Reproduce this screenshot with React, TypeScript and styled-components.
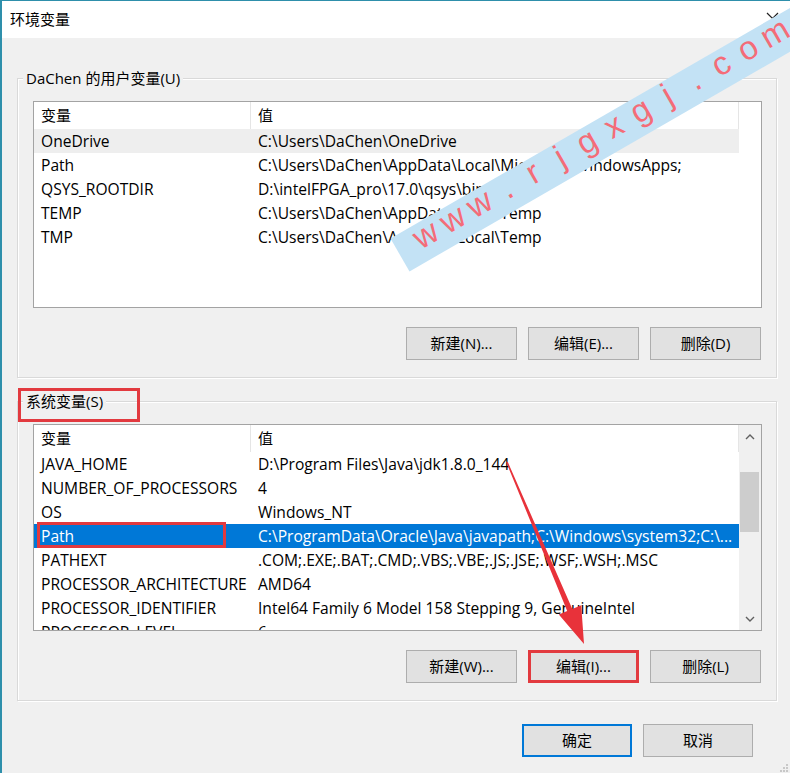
import React from 'react';
import styled, { createGlobalStyle, css } from 'styled-components';

const FONT = `"Open Sans", "Noto Sans CJK SC", sans-serif`;

const GlobalStyle = createGlobalStyle`
  html, body { margin: 0; padding: 0; background: #f0f0f0; }
  body { width: 790px; height: 773px; overflow: hidden; font-family: ${FONT}; }
  * { box-sizing: border-box; }
`;

const Page = styled.div`
  position: relative;
  width: 790px;
  height: 773px;
  overflow: hidden;
`;

const Window = styled.div`
  width: 790px;
  height: 773px;
  border-top: 1px solid #2e8fab;
  border-left: 2px solid #2e8fab;
  background: #f0f0f0;
  display: flex;
  flex-direction: column;
  color: #000;
  font-size: 15px;
`;

const TitleBar = styled.div`
  height: 37px;
  flex: none;
  background: #fff;
  display: flex;
  align-items: center;
  justify-content: space-between;
  padding: 0 11px 2px 8px;
  font-size: 15px;
`;

const CloseGlyph = styled.svg`
  margin-top: -6px;
`;

const Body = styled.div`
  display: flex;
  flex-direction: column;
  gap: 23px;
  padding: 40px 0 0 15px;
`;

const GroupBox = styled.section`
  width: 760px;
  height: 300px;
  border: 1px solid #d9d9d9;
  box-shadow: inset 1px 1px 0 #fff, 1px 1px 0 #fff;
  display: flex;
  flex-direction: column;
  padding: 0 14px 0 15px;
`;

const Legend = styled.div`
  align-self: flex-start;
  margin: -11px 0 0 -10px;
  padding: 0 3px;
  height: 20px;
  line-height: 20px;
  background: #f0f0f0;
  font-size: 15px;
`;

const List = styled.div`
  margin-top: 13px;
  height: 207px;
  border: 1px solid #a3a3a3;
  background: #fff;
  display: flex;
  overflow: hidden;
`;

const Columns = styled.div`
  width: 705px;
  display: flex;
  flex-direction: column;
`;

const Header = styled.div`
  display: grid;
  grid-template-columns: 217px 488px;
  height: 27px;
  flex: none;
`;

const HeaderCell = styled.div`
  padding: 0 0 2px 7px;
  display: flex;
  align-items: center;
  border-right: 1px solid #e5e5e5;
`;

type RowVariant = 'normal' | 'hover' | 'selected';

const Row = styled.div<{ $variant: RowVariant }>`
  display: grid;
  grid-template-columns: 217px 488px;
  height: 24px;
  flex: none;
  align-items: center;
  ${(p) =>
    p.$variant === 'hover' &&
    css`
      background: #eeeeee;
    `}
  ${(p) =>
    p.$variant === 'selected' &&
    css`
      background: #0078d7;
      color: #fff;
    `}
`;

const Cell = styled.div`
  padding-left: 7px;
  white-space: nowrap;
  overflow: hidden;
  line-height: 23px;
  font-size: 15.6px;
`;

const Scrollbar = styled.div`
  width: 22px;
  margin-left: auto;
  background: #f0f0f0;
  display: flex;
  flex-direction: column;
`;

const ScrollArrow = styled.div`
  height: 23px;
  display: flex;
  align-items: center;
  justify-content: center;
  flex: none;
`;

const Track = styled.div`
  flex: 1;
  padding: 24px 2px 0 1px;
`;

const Thumb = styled.div`
  height: 60px;
  background: #cdcdcd;
`;

const ButtonRow = styled.div<{ $top: number }>`
  margin-top: ${(p) => p.$top}px;
  display: flex;
  justify-content: flex-end;
  gap: 11px;
  padding-right: 1px;
`;

const Button = styled.button<{ $mark?: 'red' | 'default'; $w?: number }>`
  width: ${(p) => p.$w ?? 111}px;
  height: 33px;
  background: #e1e1e1;
  border: 1px solid #adadad;
  font-family: ${FONT};
  font-size: 15px;
  color: #000;
  padding: 0 0 2px;
  ${(p) =>
    p.$mark === 'red' &&
    css`
      border: 3px solid #e23a3f;
    `}
  ${(p) =>
    p.$mark === 'default' &&
    css`
      border: 2px solid #0078d7;
    `}
`;

const DialogButtons = styled.div`
  width: 760px;
  display: flex;
  justify-content: flex-end;
  gap: 11px;
  padding-right: 24px;
`;

const RedBox = styled.div<{ $x: number; $y: number; $w: number; $h: number }>`
  position: absolute;
  left: ${(p) => p.$x}px;
  top: ${(p) => p.$y}px;
  width: ${(p) => p.$w}px;
  height: ${(p) => p.$h}px;
  border: 3px solid #e23a3f;
  pointer-events: none;
`;

const Band = styled.div`
  position: absolute;
  left: 400px;
  top: 236px;
  width: 520px;
  height: 38px;
  background: #c3e2f5;
  transform-origin: 0 50%;
  transform: rotate(-30deg);
  display: flex;
  align-items: center;
  padding-left: 17px;
  pointer-events: none;
`;

const BandChar = styled.span`
  width: 31px;
  flex: none;
  text-align: center;
  font-family: "Liberation Sans", Arial, sans-serif;
  font-size: 33px;
  line-height: 38px;
  margin-top: -10px;
  color: #f46c78;
`;

const Overlay = styled.svg`
  position: absolute;
  left: 0;
  top: 0;
  pointer-events: none;
`;

const Chevron = ({ up }: { up?: boolean }) => (
  <svg width="10" height="6" viewBox="0 0 10 6">
    <polyline
      points={up ? '1,5 5,1 9,5' : '1,1 5,5 9,1'}
      fill="none"
      stroke="#606060"
      strokeWidth="1.4"
    />
  </svg>
);

type Item = [string, string];

const userVars: Item[] = [
  ['OneDrive', 'C:\\Users\\DaChen\\OneDrive'],
  ['Path', 'C:\\Users\\DaChen\\AppData\\Local\\Microsoft\\WindowsApps;'],
  ['QSYS_ROOTDIR', 'D:\\intelFPGA_pro\\17.0\\qsys\\bin'],
  ['TEMP', 'C:\\Users\\DaChen\\AppData\\Local\\Temp'],
  ['TMP', 'C:\\Users\\DaChen\\AppData\\Local\\Temp'],
];

const sysVars: Item[] = [
  ['JAVA_HOME', 'D:\\Program Files\\Java\\jdk1.8.0_144'],
  ['NUMBER_OF_PROCESSORS', '4'],
  ['OS', 'Windows_NT'],
  ['Path', 'C:\\ProgramData\\Oracle\\Java\\javapath;C:\\Windows\\system32;C:\\...'],
  ['PATHEXT', '.COM;.EXE;.BAT;.CMD;.VBS;.VBE;.JS;.JSE;.WSF;.WSH;.MSC'],
  ['PROCESSOR_ARCHITECTURE', 'AMD64'],
  ['PROCESSOR_IDENTIFIER', 'Intel64 Family 6 Model 158 Stepping 9, GenuineIntel'],
  ['PROCESSOR_LEVEL', '6'],
];

const VarList = ({
  items,
  hover,
  selected,
  scroll,
}: {
  items: Item[];
  hover?: number;
  selected?: number;
  scroll?: boolean;
}) => (
  <List>
    <Columns>
      <Header>
        <HeaderCell>变量</HeaderCell>
        <HeaderCell>值</HeaderCell>
      </Header>
      {items.map(([k, v], i) => (
        <Row key={k + i} $variant={i === selected ? 'selected' : i === hover ? 'hover' : 'normal'}>
          <Cell>{k}</Cell>
          <Cell>{v}</Cell>
        </Row>
      ))}
    </Columns>
    {scroll && (
      <Scrollbar>
        <ScrollArrow>
          <Chevron up />
        </ScrollArrow>
        <Track>
          <Thumb />
        </Track>
        <ScrollArrow>
          <Chevron />
        </ScrollArrow>
      </Scrollbar>
    )}
  </List>
);

const watermark = 'www.rjgxgj.com'.split('');

export default function App() {
  return (
    <Page>
      <GlobalStyle />
      <Window>
        <TitleBar>
          <span>环境变量</span>
          <CloseGlyph width="13" height="8" viewBox="0 0 13 8">
            <polyline points="1,1 6.5,6.5 12,1" fill="none" stroke="#222" strokeWidth="1.2" />
          </CloseGlyph>
        </TitleBar>
        <Body>
          <GroupBox>
            <Legend>DaChen 的用户变量(U)</Legend>
            <VarList items={userVars} hover={0} />
            <ButtonRow $top={19}>
              <Button>新建(N)...</Button>
              <Button>编辑(E)...</Button>
              <Button>删除(D)</Button>
            </ButtonRow>
          </GroupBox>
          <GroupBox>
            <Legend>系统变量(S)</Legend>
            <VarList items={sysVars} selected={3} scroll />
            <ButtonRow $top={19}>
              <Button>新建(W)...</Button>
              <Button $mark="red">编辑(I)...</Button>
              <Button>删除(L)</Button>
            </ButtonRow>
          </GroupBox>
          <DialogButtons>
            <Button $mark="default" $w={110}>
              确定
            </Button>
            <Button $w={110}>取消</Button>
          </DialogButtons>
        </Body>
      </Window>

      <Band>
        {watermark.map((c, i) => (
          <BandChar key={i}>{c}</BandChar>
        ))}
      </Band>

      <RedBox $x={18} $y={388} $w={122} $h={34} />
      <RedBox $x={37} $y={522} $w={189} $h={26} />

      <Overlay width="790" height="773" viewBox="0 0 790 773">
        <polygon
          points="507.7,461.7 572.3,608.9 581.2,605.2 584,644 558.8,614.6 567.2,610.9 506.3,462.3"
          fill="#e8323a"
        />
        <g fill="#c8c8c8">
          <rect x="786" y="764" width="2" height="2" />
          <rect x="783" y="767" width="2" height="2" />
          <rect x="786" y="767" width="2" height="2" />
          <rect x="780" y="770" width="2" height="2" />
          <rect x="783" y="770" width="2" height="2" />
          <rect x="786" y="770" width="2" height="2" />
        </g>
      </Overlay>
    </Page>
  );
}
